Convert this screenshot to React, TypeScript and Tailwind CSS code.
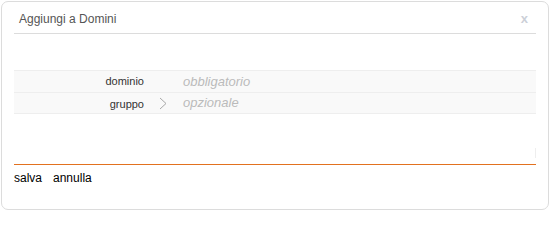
export default function App() {
  return (
    <div className="w-[550px] h-[211px] bg-white pt-px pl-px" style={{ fontFamily: '"Liberation Sans", Arial, sans-serif' }}>
      <div className="w-[548px] h-[209px] border border-[#dcdcdc] rounded-[7px] px-3 flex flex-col">
        <div className="h-[32px] flex items-center justify-between border-b border-[#dcdcdc]">
          <span className="pl-[5px] text-[12px] text-[#555] pt-[3px]">Aggiungi a Domini</span>
          <span className="pr-[8px] text-[13px] font-bold text-[#ccd0d8] pt-[2px]">x</span>
        </div>
        <div className="h-[36px]" />
        <div className="flex flex-col">
          <div className="h-[22px] flex items-center bg-[#f9f9f9] border-t border-[#eeeeee]">
            <span className="w-[130px] text-right text-[11px] text-[#333]">dominio</span>
            <span className="w-[40px]" />
            <span className="text-[13px] italic text-[#bbb] -ml-px">obbligatorio</span>
          </div>
          <div className="h-[22px] flex items-center bg-[#f9f9f9] border-t border-b border-[#eeeeee]">
            <span className="w-[130px] text-right text-[11px] text-[#333] pt-[2px]">gruppo</span>
            <span className="w-[40px] flex pl-[15px]">
              <svg width="8" height="13" viewBox="0 0 8 13">
                <path d="M1 1 L7 6.5 L1 12" fill="none" stroke="#a8a8a8" strokeWidth="1" />
              </svg>
            </span>
            <span className="text-[13px] italic text-[#bbb] -ml-px">opzionale</span>
          </div>
        </div>
        <div className="h-[50px] flex justify-end">
          <div className="mt-[34px] w-px h-[10px] bg-[#eee]" />
        </div>
        <div className="h-px bg-[#e2711f]" />
        <div className="flex gap-[11px] pt-[4px] text-[12px] text-black">
          <span>salva</span>
          <span>annulla</span>
        </div>
      </div>
    </div>
  );
}
